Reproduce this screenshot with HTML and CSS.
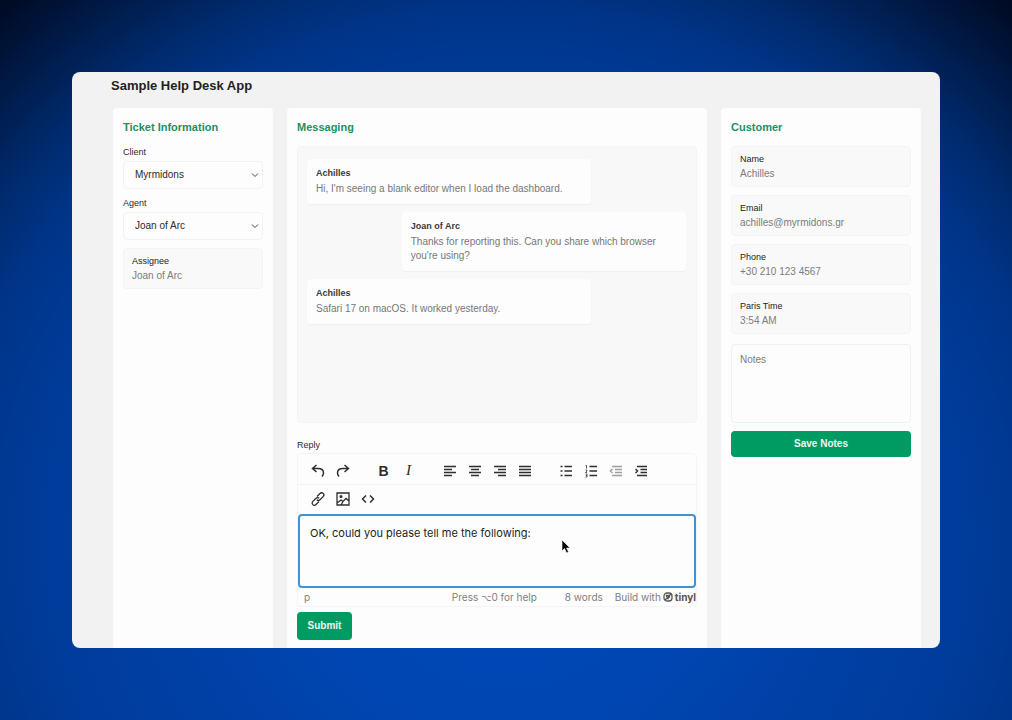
FILE: index.html
```html
<!DOCTYPE html>
<html lang="en">
<head>
  <meta charset="UTF-8" />
  <meta name="viewport" content="width=device-width, initial-scale=1" />
  <title>Sample Help Desk App</title>
  <link rel="stylesheet" href="styles.css">
</head>
<body>
  <div class="app">
    <h1>Sample Help Desk App</h1>
    <main class="columns">

      <section class="panel">
        <h2>Ticket Information</h2>
        <div class="field">
          <label for="client">Client</label>
          <div class="select-wrap">
            <select id="client"><option>Myrmidons</option></select>
            <svg class="chevron" viewBox="0 0 8 8"><path d="M1 2.5 4 5.5 7 2.5"/></svg>
          </div>
        </div>
        <div class="field">
          <label for="agent">Agent</label>
          <div class="select-wrap">
            <select id="agent"><option>Joan of Arc</option></select>
            <svg class="chevron" viewBox="0 0 8 8"><path d="M1 2.5 4 5.5 7 2.5"/></svg>
          </div>
        </div>
        <div class="info"><strong>Assignee</strong><span>Joan of Arc</span></div>
      </section>

      <section class="panel">
        <h2>Messaging</h2>
        <div class="messages">
          <div class="message">
            <strong>Achilles</strong>
            <p>Hi, I'm seeing a blank editor when I load the dashboard.</p>
          </div>
          <div class="message agent">
            <strong>Joan of Arc</strong>
            <p>Thanks for reporting this. Can you share which browser you're using?</p>
          </div>
          <div class="message">
            <strong>Achilles</strong>
            <p>Safari 17 on macOS. It worked yesterday.</p>
          </div>
        </div>

        <form class="reply">
          <label for="reply">Reply</label>
          <div class="editor">
            <div class="toolbar">
              <div class="group">
                <button type="button" aria-label="Undo"><svg viewBox="0 0 16 16"><path d="M6.500 2 2.500 5.500l4 3.500M3 5.500h5c3.500 0 5.500 2 5.500 4.500 0 1.500-.6 2.500-1.500 3.500"/></svg></button>
                <button type="button" aria-label="Redo"><svg viewBox="0 0 16 16"><path d="M9.500 2l4 3.500-4 3.500M13 5.500H8c-3.500 0-5.500 2-5.500 4.500 0 1.500.6 2.500 1.500 3.500"/></svg></button>
              </div>
              <div class="group">
                <button type="button" class="bold">B</button>
                <button type="button" class="italic">I</button>
              </div>
              <div class="group">
                <button type="button" aria-label="Align left"><svg viewBox="0 0 16 16"><path d="M2 3.500h12M2 6.500h8M2 9.500h12M2 12.500h8"/></svg></button>
                <button type="button" aria-label="Align center"><svg viewBox="0 0 16 16"><path d="M2 3.500h12M4 6.500h8M2 9.500h12M4 12.500h8"/></svg></button>
                <button type="button" aria-label="Align right"><svg viewBox="0 0 16 16"><path d="M2 3.500h12M6 6.500h8M2 9.500h12M6 12.500h8"/></svg></button>
                <button type="button" aria-label="Justify"><svg viewBox="0 0 16 16"><path d="M2 3.500h12M2 6.500h12M2 9.500h12M2 12.500h12"/></svg></button>
              </div>
              <div class="group">
                <button type="button" aria-label="Bullet list"><svg viewBox="0 0 16 16"><path d="M6.500 3.500h7.500M6.500 8h7.500M6.500 12.500h7.500M2.500 3.500h2M2.500 8h2M2.500 12.500h2"/></svg></button>
                <button type="button" aria-label="Numbered list"><svg viewBox="0 0 16 16"><path d="M6.500 3.500h7.500M6.500 8h7.500M6.500 12.500h7.500"/><path class="thin" d="M2.500 2.500h1v3M2.500 7h1.500v1L2.500 9.500H4M2.500 11H4v3H2.500M3 12.500h1"/></svg></button>
                <button type="button" aria-label="Decrease indent" disabled><svg viewBox="0 0 16 16"><path d="M4 3.500h10M7 6.500h7M7 9.500h7M4 12.500h10M4.500 6 2.500 8l2 2"/></svg></button>
                <button type="button" aria-label="Increase indent"><svg viewBox="0 0 16 16"><path d="M4 3.500h10M7.500 6.500H14M7.500 9.500H14M4 12.500h10M2.500 6l2 2-2 2"/></svg></button>
              </div>
            </div>
            <div class="toolbar last">
              <div class="group">
                <button type="button" aria-label="Link"><svg viewBox="0 0 16 16"><path class="mid" d="M7 5.500l3-3c1-1 2.300-1 3.200-.1s.9 2.200-.1 3.200L10 8.700c-1 1-2.300 1-3.200.1M9 10.500l-3 3c-1 1-2.300 1-3.200.1s-.9-2.200.1-3.200L6 7.300c1-1 2.300-1 3.200-.1"/></svg></button>
                <button type="button" aria-label="Image"><svg viewBox="0 0 16 16"><path class="mid" d="M2 2h12v12H2zM2 12l4-3 2 1.500L11 7.500l3 2.500M8 10.500 6 14"/><circle cx="6" cy="5.500" r="0.800"/></svg></button>
                <button type="button" aria-label="Source code"><svg viewBox="0 0 16 16"><path d="M6 4.500 2.500 8 6 11.500M10 4.500 13.500 8 10 11.500"/></svg></button>
              </div>
            </div>
            <div class="edit-area">
              <textarea id="reply">OK, could you please tell me the following:</textarea>
              <svg class="cursor" viewBox="0 0 10 15"><path d="M1 1v11l2.600-2.500L5.500 14l2-.9-1.900-4.100H9z"/></svg>
            </div>
            <div class="statusbar">
              <span>p</span>
              <span class="help">Press <span class="key">⌥</span>0 for help</span>
              <span class="words">8 words</span>
              <span class="brand">Build with
                <svg viewBox="0 0 10 10"><rect x="1" y="1" width="8" height="8" rx="3"/><path d="M3.500 5V3.500H6.500V5L3.500 6.500H6M2 8 8 2"/></svg>
                <b>tinyl</b>
              </span>
            </div>
          </div>
          <button type="submit" class="btn">Submit</button>
        </form>
      </section>

      <section class="panel">
        <h2>Customer</h2>
        <div class="info"><strong>Name</strong><span>Achilles</span></div>
        <div class="info"><strong>Email</strong><span>achilles@myrmidons.gr</span></div>
        <div class="info"><strong>Phone</strong><span>+30 210 123 4567</span></div>
        <div class="info"><strong>Paris Time</strong><span>3:54 AM</span></div>
        <textarea class="notes" placeholder="Notes" aria-label="Notes"></textarea>
        <button type="button" class="btn">Save Notes</button>
      </section>

    </main>
  </div>
</body>
</html>
```

FILE: styles.css
```css
* { box-sizing: border-box; }

body {
  margin: 0;
  height: 100vh;
  padding: 72px;
  display: flex;
  font-family: "Liberation Sans", Arial, sans-serif;
  font-size: 10px;
  line-height: 14px;
  color: #2b2b2b;
  background: radial-gradient(ellipse 75% 100% at 50% 75%, #0047b6 0%, #0046b3 25%, #003b99 63%, #003487 74%, #002a6c 82%, #000a22 100%);
}

button, select, textarea { font: inherit; color: inherit; }
h1, h2, p { margin: 0; }

.app {
  flex: 1;
  min-width: 0;
  display: flex;
  flex-direction: column;
  padding: 5px 19px 0 39px;
  background: #f2f2f2;
  border-radius: 8px;
  overflow: hidden;
}

h1 { font-size: 13px; line-height: 18px; color: #222; }
h2 { font-size: 11px; line-height: 18px; color: #1d8f65; margin-bottom: 2px; }

.columns {
  flex: 1;
  min-height: 0;
  display: grid;
  grid-template-columns: 160px minmax(0, 1fr) 200px;
  gap: 14px;
  padding: 13px 0 0 2px;
}

.panel {
  min-height: 0;
  display: flex;
  flex-direction: column;
  gap: 8px;
  padding: 10px 10px 8px;
  background: #fdfdfd;
  border-radius: 4px 4px 0 0;
}

label { font-size: 9px; line-height: 12px; }
.field { display: flex; flex-direction: column; gap: 3px; }

.select-wrap { position: relative; }
.select-wrap select {
  display: block;
  width: 100%;
  height: 28px;
  padding: 0 11px;
  font-size: 10px;
  background: #fdfdfd;
  border: 1px solid #f2f2f2;
  border-radius: 4px;
  appearance: none;
}
.chevron {
  position: absolute;
  right: 4px;
  top: 10px;
  width: 8px;
  height: 8px;
  fill: none;
  stroke: #444;
}

.info {
  display: flex;
  flex-direction: column;
  gap: 2px;
  padding: 6px 8px 5px;
  background: #f9f9f9;
  border: 1px solid #f4f4f4;
  border-radius: 4px;
}
.info strong { font-size: 9px; line-height: 12px; font-weight: normal; color: #1c1c1c; }
.info span { color: #7c7c7c; }

/* Conversation */
.messages {
  flex: 1;
  min-height: 0;
  display: flex;
  flex-direction: column;
  gap: 8px;
  padding: 12px 10px 12px 9px;
  background: #f8f8f8;
  border: 1px solid #f4f4f4;
  border-radius: 4px;
}
.message {
  width: 75%;
  padding: 8px 9px;
  background: #fdfdfd;
  border-radius: 4px;
  box-shadow: 0 1px 1px #efefef;
}
.message.agent { align-self: flex-end; }
.message strong { display: block; font-size: 9px; line-height: 12px; margin-bottom: 3px; color: #3a3a3a; }
.message p { color: #777; }

/* Reply editor */
.reply { display: flex; flex-direction: column; gap: 2px; padding-top: 8px; }
.editor { border: 1px solid #f4f4f4; border-radius: 4px; }
.toolbar { display: flex; gap: 16px; height: 31px; padding: 3px 7px 0; border-bottom: 1px solid #f2f2f2; }
.toolbar.last { height: 29px; padding: 0 7px 2px; border: 0; }
.group { display: flex; }
.toolbar button {
  width: 25px;
  padding: 0;
  display: flex;
  align-items: center;
  justify-content: center;
  background: none;
  border: 0;
}
.toolbar button:disabled { opacity: 0.45; }
.toolbar svg { width: 16px; height: 16px; fill: none; stroke: #2f2f2f; stroke-width: 1.5; }
.toolbar .mid { stroke-width: 1.3; }
.toolbar .thin { stroke-width: 0.8; }
.toolbar .bold { font-size: 14px; font-weight: bold; }
.toolbar .italic { font: italic 15px "Liberation Serif", serif; }

.edit-area { position: relative; }
.edit-area textarea {
  display: block;
  width: 100%;
  height: 74px;
  padding: 9px 10px;
  font-family: Inter, sans-serif;
  font-size: 11px;
  line-height: 16px;
  color: #1d1d1d;
  background: #fdfdfd;
  border: 2px solid #4490d4;
  border-radius: 4px;
  outline: 0;
  resize: none;
}
.cursor {
  position: absolute;
  left: 66%;
  top: 25px;
  width: 10px;
  height: 15px;
  fill: #000;
  stroke: #fff;
  stroke-width: 0.6;
}

.statusbar {
  display: flex;
  height: 18px;
  align-items: center;
  padding-left: 6px;
  font-family: Inter, sans-serif;
  color: #7d7d7d;
  white-space: nowrap;
}
.help { margin-left: auto; }
.key { font-family: "DejaVu Sans", sans-serif; font-size: 9px; }
.words { margin: 0 12px 0 28px; }
.brand { display: flex; align-items: center; gap: 2px; }
.brand svg { width: 10px; height: 10px; fill: none; stroke: #555; stroke-width: 1.3; }
.brand b { color: #555; }

.btn {
  height: 26px;
  padding: 0;
  font-weight: bold;
  color: #e9f7f1;
  background: #009a63;
  border: 0;
  border-radius: 4px;
}
.reply .btn { width: 55px; height: 28px; margin-top: 3px; }

.notes {
  height: 79px;
  margin: 2px 0 0;
  padding: 8px;
  background: #fdfdfd;
  border: 1px solid #f0f0f0;
  border-radius: 4px;
  resize: none;
}
.notes::placeholder { color: #7c7c7c; }
```
